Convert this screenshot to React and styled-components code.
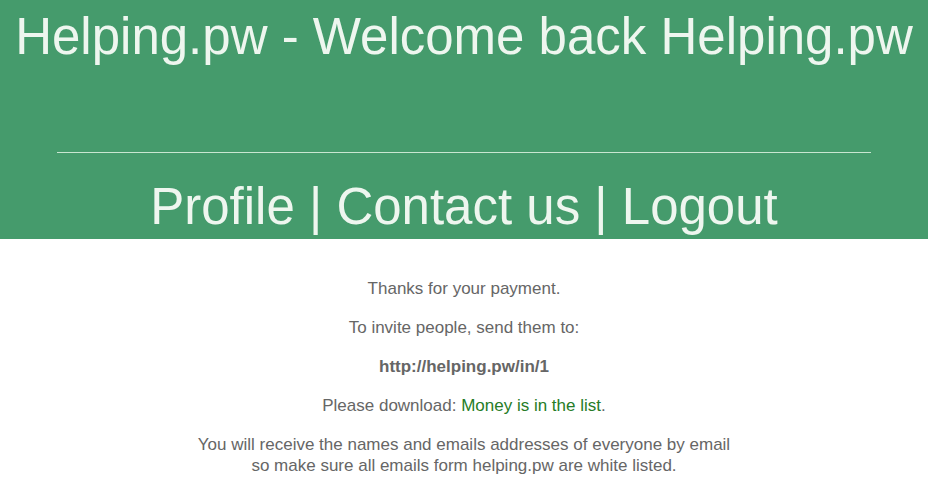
import React from "react";
import styled, { createGlobalStyle } from "styled-components";

const Global = createGlobalStyle`
  html, body { margin: 0; padding: 0; background: #ffffff; }
  body { font-family: "Liberation Sans", Arial, sans-serif; }
`;

const Header = styled.header`
  background: #459b6c;
  color: #eef6ef;
  padding: 8px 0 3px;
  text-align: center;
`;

const Title = styled.h1`
  margin: 0;
  font-size: 51px;
  font-weight: 400;
  line-height: 58px;
`;

const Rule = styled.hr`
  width: 814px;
  height: 1px;
  border: 0;
  margin: 86px auto 25px;
  background: #c9e6d1;
`;

const Nav = styled.nav`
  font-size: 51px;
  line-height: 58px;
`;

const NavLink = styled.a`
  color: inherit;
  text-decoration: none;
`;

const Main = styled.main`
  padding-top: 39px;
  text-align: center;
  color: #666666;
  font-size: 17px;
  line-height: 21px;
`;

const Para = styled.p`
  margin: 0 0 18px;
  font-weight: ${(p) => (p.$bold ? 700 : 400)};
`;

const Link = styled.a`
  color: #267c26;
  text-decoration: none;
`;

export default function App() {
  return (
    <>
      <Global />
      <Header>
        <Title>Helping.pw - Welcome back Helping.pw</Title>
        <Rule />
        <Nav>
          <NavLink href="#">Profile</NavLink> | <NavLink href="#">Contact us</NavLink> |{" "}
          <NavLink href="#">Logout</NavLink>
        </Nav>
      </Header>
      <Main>
        <Para>Thanks for your payment.</Para>
        <Para>To invite people, send them to:</Para>
        <Para $bold>http://helping.pw/in/1</Para>
        <Para>
          Please download: <Link href="#">Money is in the list</Link>.
        </Para>
        <Para>
          You will receive the names and emails addresses of everyone by email
          <br />
          so make sure all emails form helping.pw are white listed.
        </Para>
      </Main>
    </>
  );
}
